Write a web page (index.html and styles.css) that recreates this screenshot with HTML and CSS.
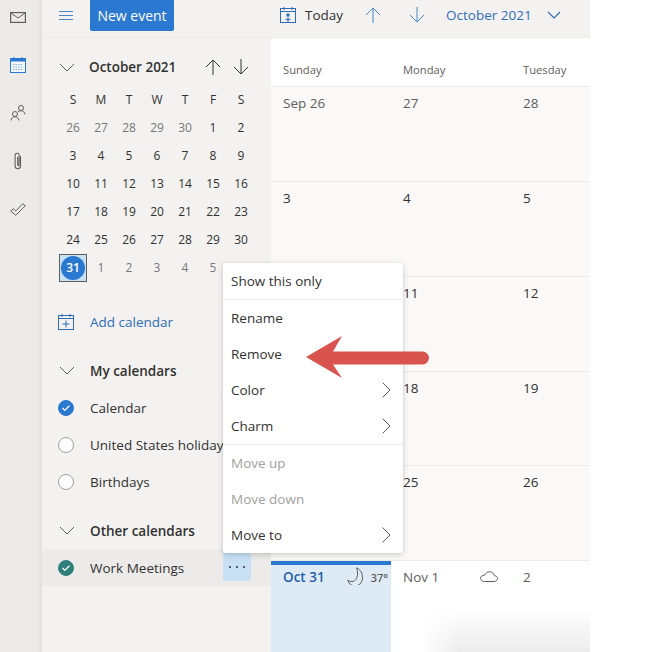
FILE: index.html
```html
<!DOCTYPE html>
<html lang="en">
<head>
<meta charset="utf-8">
<title>Calendar</title>
<link rel="stylesheet" href="styles.css">
</head>
<body>
<div class="app">
  <nav class="rail">
    <svg class="rail-icon" viewBox="0 0 16 11" width="16" height="11"><rect x=".6" y=".6" width="14.800" height="9.800" fill="none" stroke="#605e5c" stroke-width="1.200"/><path d="M.8 1 8 6l7.200-5" fill="none" stroke="#605e5c"/></svg>
    <svg class="rail-icon" viewBox="0 0 16 16" width="16" height="16"><rect x=".5" y="1.500" width="15" height="14" fill="#f4f7fb" stroke="#2b78d0"/><rect x=".5" y="1.500" width="15" height="3" fill="#2b78d0"/><path d="M4 0v3M12 0v3" stroke="#2b78d0"/><path d="M3 7.500h10M3 10h10M3 12.500h10" stroke="#7fb0e6" stroke-width="1.200" stroke-dasharray="1.500 1"/></svg>
    <svg class="rail-icon" viewBox="0 0 16 16" width="16" height="16"><circle cx="11" cy="3" r="2.500" fill="none" stroke="#605e5c"/><circle cx="5" cy="9" r="2.500" fill="none" stroke="#605e5c"/><path d="M1 15.500c.4-2.500 2-3.700 4-3.700s3.600 1.200 4 3.700M8 6.800c.8-.8 1.800-1.100 3-1.100 2 0 3.600 1.200 4 3.700" fill="none" stroke="#605e5c"/></svg>
    <svg class="rail-icon" viewBox="0 0 8 18" width="8" height="18"><path d="M6.500 4v10a2.700 2.700 0 0 1-5.400 0V3.200a2 2 0 0 1 4 0v9.800a.7.7 0 0 1-1.400 0V5" fill="none" stroke="#605e5c" stroke-width="1.100"/></svg>
    <svg class="rail-icon" viewBox="0 0 16 13" width="16" height="13"><path d="M.7 8 3.300 5.800 5.700 8 12.800.7 15.300 2.800 5.700 12.300Z" fill="none" stroke="#605e5c"/></svg>
  </nav>

  <aside class="sidebar">
    <div class="side-top">
      <svg class="hamburger" viewBox="0 0 14 9" width="14" height="9"><path d="M0 .5h14M0 4.500h14M0 8.500h14" stroke="#4a86c5"/></svg>
      <div class="new-event">New event</div>
    </div>

    <div class="mini-head">
      <svg class="chev" viewBox="0 0 16 9" width="16" height="9"><path d="M1 1l7 7 7-7" fill="none" stroke="#605e5c"/></svg>
      <span class="mini-title">October 2021</span>
      <svg class="mini-arrow" viewBox="0 0 16 16" width="16" height="16"><path d="M8 16V1M1 8l7-7 7 7" fill="none" stroke="#323130"/></svg>
      <svg class="mini-arrow" viewBox="0 0 16 16" width="16" height="16"><path d="M8 0v15M1 8l7 7 7-7" fill="none" stroke="#323130"/></svg>
    </div>

    <div class="mini-grid">
      <span class="dow">S</span><span class="dow">M</span><span class="dow">T</span><span class="dow">W</span><span class="dow">T</span><span class="dow">F</span><span class="dow">S</span>
      <span class="muted">26</span><span class="muted">27</span><span class="muted">28</span><span class="muted">29</span><span class="muted">30</span><span>1</span><span>2</span>
      <span>3</span><span>4</span><span>5</span><span>6</span><span>7</span><span>8</span><span>9</span>
      <span>10</span><span>11</span><span>12</span><span>13</span><span>14</span><span>15</span><span>16</span>
      <span>17</span><span>18</span><span>19</span><span>20</span><span>21</span><span>22</span><span>23</span>
      <span>24</span><span>25</span><span>26</span><span>27</span><span>28</span><span>29</span><span>30</span>
      <span class="today-cell"><b class="today-dot">31</b></span><span class="muted">1</span><span class="muted">2</span><span class="muted">3</span><span class="muted">4</span><span class="muted">5</span><span></span>
    </div>

    <div class="add-cal">
      <svg viewBox="0 0 16 16" width="16" height="16"><rect x=".5" y="1.500" width="15" height="14" fill="none" stroke="#2f6db5"/><path d="M.5 4.500h15M4 0v3M12 0v3M8 6.500v7M4.500 10h7" fill="none" stroke="#2f6db5"/></svg>
      <span>Add calendar</span>
    </div>

    <div class="cal-group">
      <svg class="chev" viewBox="0 0 16 9" width="16" height="9"><path d="M1 1l7 7 7-7" fill="none" stroke="#605e5c"/></svg>
      <span>My calendars</span>
    </div>
    <div class="cal-row">
      <span class="check blue"><svg viewBox="0 0 8 6" width="8" height="6"><path d="M.5 3l2.300 2.300L7.500.7" fill="none" stroke="#fff" stroke-width="1.200"/></svg></span>
      <span class="cal-name">Calendar</span>
    </div>
    <div class="cal-row">
      <span class="check"></span>
      <span class="cal-name">United States holidays</span>
    </div>
    <div class="cal-row">
      <span class="check"></span>
      <span class="cal-name">Birthdays</span>
    </div>
    <div class="cal-group second">
      <svg class="chev" viewBox="0 0 16 9" width="16" height="9"><path d="M1 1l7 7 7-7" fill="none" stroke="#605e5c"/></svg>
      <span>Other calendars</span>
    </div>
    <div class="cal-row selected">
      <span class="check teal"><svg viewBox="0 0 8 6" width="8" height="6"><path d="M.5 3l2.300 2.300L7.500.7" fill="none" stroke="#fff" stroke-width="1.200"/></svg></span>
      <span class="cal-name">Work Meetings</span>
      <span class="more"><svg viewBox="0 0 16 2" width="16" height="2"><circle cx="1" cy="1" r="1" fill="#323130"/><circle cx="8" cy="1" r="1" fill="#323130"/><circle cx="15" cy="1" r="1" fill="#323130"/></svg></span>
    </div>
  </aside>

  <main class="main">
    <div class="toolbar">
      <svg class="today-icon" viewBox="0 0 16 16" width="16" height="16"><rect x=".5" y="1.500" width="15" height="14" fill="none" stroke="#2f6db5"/><path d="M.5 4.500h15M4 0v3M12 0v3" stroke="#2f6db5" fill="none"/><path d="M8 10v6M5.500 12.500h5" stroke="#2f6db5" fill="none"/><rect x="6.500" y="6.500" width="3" height="3" fill="#2f6db5"/></svg>
      <span class="today-label">Today</span>
      <svg class="tb-up" viewBox="0 0 16 16" width="16" height="16"><path d="M8 16V1M1 8l7-7 7 7" fill="none" stroke="#4a86c5"/></svg>
      <svg class="tb-down" viewBox="0 0 16 16" width="16" height="16"><path d="M8 0v15M1 8l7 7 7-7" fill="none" stroke="#4a86c5"/></svg>
      <span class="tb-month">October 2021</span>
      <svg class="tb-chev" viewBox="0 0 14 8" width="14" height="8"><path d="M1 1l6 6 6-6" fill="none" stroke="#2f6db5" stroke-width="1.200"/></svg>
    </div>

    <div class="month">
      <div class="week-head">
        <span>Sunday</span><span>Monday</span><span>Tuesday</span>
      </div>
      <div class="week">
        <span class="sep">Sep 26</span><span class="sep">27</span><span class="sep">28</span>
      </div>
      <div class="week">
        <span>3</span><span>4</span><span>5</span>
      </div>
      <div class="week">
        <span></span><span>11</span><span>12</span>
      </div>
      <div class="week short">
        <span></span><span>18</span><span>19</span>
      </div>
      <div class="week">
        <span></span><span>25</span><span>26</span>
      </div>
      <div class="week current">
        <div class="day today">
          <span class="oct">Oct 31</span>
          <svg class="moon" viewBox="0 0 16 18" width="16" height="18"><path d="M9.600.8c3 1.300 5.700 4.200 5.700 8a7.500 8 0 0 1-14.600 4.300c1.300 1 2.800 1.500 4.300 1.500 4.300 0 7.200-6.400 4.600-13.800Z" fill="none" stroke="#605e5c"/></svg>
          <span class="temp">37°</span>
        </div>
        <div class="day">
          <span class="nov">Nov 1</span>
          <svg class="cloud" viewBox="0 0 18 11" width="18" height="11"><path d="M4.300 10.500h9.700c2 0 3.500-1.200 3.500-2.900 0-1.600-1.300-2.700-3-2.800C14 2.500 12 .7 9.500.7 7.300.7 5.500 2 4.800 4 2.300 4.100.5 5.500.5 7.400s1.700 3.100 3.800 3.100Z" fill="none" stroke="#605e5c"/></svg>
        </div>
        <div class="day"><span class="nov">2</span></div>
      </div>
    </div>
  </main>
</div>

<div class="menu">
  <div class="item rule">Show this only</div>
  <div class="item">Rename</div>
  <div class="item">Remove</div>
  <div class="item">Color<svg class="sub" viewBox="0 0 9 16" width="9" height="16"><path d="M.5.500 8 8 .5 15.500" fill="none" stroke="#605e5c"/></svg></div>
  <div class="item rule">Charm<svg class="sub" viewBox="0 0 9 16" width="9" height="16"><path d="M.5.500 8 8 .5 15.500" fill="none" stroke="#605e5c"/></svg></div>
  <div class="item off">Move up</div>
  <div class="item off">Move down</div>
  <div class="item">Move to<svg class="sub" viewBox="0 0 9 16" width="9" height="16"><path d="M.5.500 8 8 .5 15.500" fill="none" stroke="#605e5c"/></svg></div>
</div>

<svg class="callout" viewBox="0 0 124 44" width="124" height="44"><path d="M0 21 36 0 27 15.500H116.500a6.500 6.500 0 0 1 0 13H27L36 42Z" fill="#d9534f"/></svg>
</body>
</html>
```

FILE: styles.css
```css
* { box-sizing: border-box; }
html, body { margin: 0; height: 100%; }
body {
  position: relative;
  width: 648px;
  height: 652px;
  overflow: hidden;
  background: #fff;
  font-family: "Open Sans", "Noto Sans", sans-serif;
  font-size: 13.5px;
  color: #323130;
}
.app { display: flex; width: 590px; height: 652px; }

.rail {
  flex: 0 0 42px;
  display: flex;
  flex-direction: column;
  align-items: center;
  background: #edebe9;
  padding-right: 6px;
  box-shadow: inset -6px 0 6px -6px #d8d6d4;
}
.rail-icon { flex: none; }
.rail-icon:nth-child(1) { margin-top: 12px; }
.rail-icon:nth-child(2) { margin-top: 34px; }
.rail-icon:nth-child(3) { margin-top: 32px; }
.rail-icon:nth-child(4) { margin-top: 31px; }
.rail-icon:nth-child(5) { margin-top: 33px; }

.sidebar { flex: 0 0 229px; background: #f3f2f1; }
.side-top {
  display: flex;
  align-items: flex-start;
  height: 38px;
  padding-left: 17px;
  border-bottom: 1px solid #edebe9;
}
.hamburger { margin-top: 11px; }
.new-event {
  margin-left: 17px;
  width: 84px;
  height: 31px;
  background: #2b78d0;
  color: #fff;
  border-radius: 0 0 2px 2px;
  font-size: 14px;
  font-weight: 500;
  line-height: 31px;
  text-align: center;
}

.mini-head {
  display: flex;
  align-items: center;
  height: 34px;
  margin: 12px 0 2px;
  padding-left: 17px;
}
.mini-title { margin-left: 14px; width: 116px; font-size: 13.500px; font-weight: 600; }
.mini-arrow { margin-right: 12px; }
.chev { flex: none; }

.mini-grid {
  display: grid;
  grid-template-columns: repeat(7, 28px);
  grid-auto-rows: 28px;
  margin-left: 17px;
  font-size: 12px;
  text-align: center;
  line-height: 28px;
}
.muted { color: #797775; }
.today-cell {
  display: flex;
  align-items: center;
  justify-content: center;
  background: #c7e0f4;
  border: 1px solid #605e5c;
}
.today-dot {
  display: block;
  width: 24px;
  height: 24px;
  border-radius: 50%;
  background: #2b78d0;
  color: #fff;
  font-weight: 600;
  font-size: 12px;
  line-height: 24px;
}

.add-cal {
  display: flex;
  align-items: center;
  gap: 16px;
  height: 38px;
  margin-top: 21px;
  padding-left: 16px;
  color: #2f6db5;
}
.cal-group {
  display: flex;
  align-items: center;
  gap: 15px;
  height: 37px;
  margin-top: 11px;
  padding-left: 17px;
  font-weight: 600;
}
.cal-group.second { margin-top: 12px; }
.cal-row {
  display: flex;
  align-items: center;
  gap: 16px;
  height: 37px;
  padding-left: 16px;
  white-space: nowrap;
}
.cal-row.selected { background: #edebe9; }
.check {
  flex: none;
  display: flex;
  align-items: center;
  justify-content: center;
  width: 16px;
  height: 16px;
  border-radius: 50%;
  background: #fff;
  border: 1px solid #a19f9d;
}
.check.blue { background: #2b78d0; border-color: #2b78d0; }
.check.teal { background: #2f7f7b; border-color: #2f7f7b; }
.more {
  position: absolute;
  left: 223px;
  top: 553px;
  display: flex;
  align-items: center;
  justify-content: center;
  width: 28px;
  height: 28px;
  background: #c7e0f4;
  border-radius: 2px;
}

.main { flex: 0 0 319px; overflow: hidden; }
.toolbar {
  display: flex;
  align-items: center;
  height: 38px;
  padding: 0 0 8px 9px;
  background: #f3f2f1;
  border-bottom: 1px solid #edebe9;
}
.today-icon { flex: none; }
.today-label { flex: none; margin-left: 9px; width: 36px; }
.tb-up { flex: none; margin-left: 24px; }
.tb-down { flex: none; margin-left: 28px; }
.tb-month { flex: none; margin-left: 21px; color: #2f6db5; width: 84px; white-space: nowrap; }
.tb-chev { flex: none; margin-left: 17px; }

.month { display: flex; flex-direction: column; }
.week-head,
.week {
  display: grid;
  grid-template-columns: repeat(3, 120px);
}
.week-head {
  height: 49px;
  align-items: end;
  border-bottom: 1px solid #edebe9;
  font-size: 11.200px;
  color: #605e5c;
  background: #fff;
}
.week-head span { padding: 0 0 9px 12px; }
.week {
  height: 95px;
  background: #faf9f8;
  border-bottom: 1px solid #edebe9;
}
.week.short { height: 94px; }
.week span { padding: 7px 0 0 12px; }
.week .sep { color: #605e5c; }
.week.current {
  position: relative;
  height: 91px;
  background: #fff;
  border-bottom: 0;
}
.week.current::after {
  content: "";
  position: absolute;
  left: 149px;
  top: 46px;
  width: 170px;
  height: 45px;
  background: linear-gradient(to bottom, rgba(0, 0, 0, 0), rgba(0, 0, 0, .075));
  -webkit-mask-image: linear-gradient(to right, transparent, #000 40px);
  mask-image: linear-gradient(to right, transparent, #000 40px);
}
.day { display: flex; align-items: flex-start; padding-top: 4px; white-space: nowrap; }
.day.today {
  background: #deebf7;
  border-top: 4px solid #2b78d0;
  padding-top: 0;
}
.week .day span { padding: 3px 0 0 12px; }
.week .oct { color: #1f5fa8; font-weight: 600; flex: none; }
.week .day .temp { font-size: 11px; font-weight: 600; color: #605e5c; padding: 5px 0 0 8px; }
.week .nov { color: #605e5c; }
.moon { margin: 2px 0 0 22px; flex: none; }
.cloud { margin: 6px 0 0 41px; flex: none; }

.menu {
  position: absolute;
  left: 223px;
  top: 263px;
  width: 180px;
  background: #fff;
  border-radius: 2px;
  box-shadow: 0 2px 6px rgba(0, 0, 0, .16), 0 0 2px rgba(0, 0, 0, .1);
}
.item {
  display: flex;
  align-items: center;
  justify-content: space-between;
  height: 36px;
  padding: 0 12px 1px 8px;
}
.item.rule { height: 37px; border-bottom: 1px solid #edebe9; }
.item.off { color: #a19f9d; }
.sub { flex: none; }

.callout { position: absolute; left: 306px; top: 336px; }
```
